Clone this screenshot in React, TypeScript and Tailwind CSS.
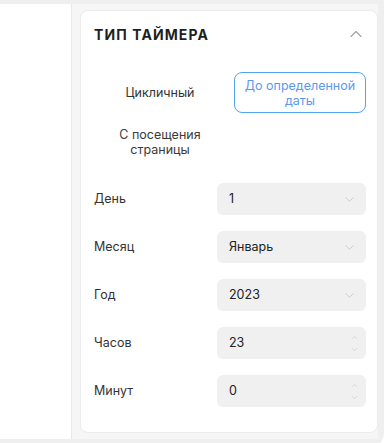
import { ChevronUp, ChevronDown } from "lucide-react";

const selects = [
    { label: "День", value: "1" },
    { label: "Месяц", value: "Январь" },
    { label: "Год", value: "2023" },
];

const numbers = [
    { label: "Часов", value: "23" },
    { label: "Минут", value: "0" },
];

function SelectBox({ value }: { value: string }) {
    return (
        <div className="flex h-8 items-center justify-between rounded-md bg-[#f0f0f0] pl-3 pr-[9px] text-[12.5px] text-[#222]">
            <span>{value}</span>
            <ChevronDown size={15} strokeWidth={1.2} className="text-[#c2c2c2]" />
        </div>
    );
}

function NumberBox({ value }: { value: string }) {
    return (
        <div className="flex h-8 items-center justify-between rounded-md bg-[#f0f0f0] pl-3 pr-[7px] text-[12.5px] text-[#222]">
            <span>{value}</span>
            <div className="flex flex-col items-center gap-[3px] text-[#c2c2c2]">
                <ChevronUp size={9} strokeWidth={1.4} />
                <ChevronDown size={9} strokeWidth={1.4} />
            </div>
        </div>
    );
}

export default function App() {
    return (
        <div
            className="h-[443px] w-[386px] overflow-hidden bg-white"
            style={{ fontFamily: "Inter, 'Noto Sans', sans-serif" }}
        >
            <div className="-mt-[10px] flex h-[457px] w-[384px] rounded-r-[14px] border-t-[14px] border-b-[8px] border-r-[6px] border-[#efefef] bg-white">
                {/* Left blank column */}
                <div className="w-[72px] shrink-0 border-r border-[#e8e8e8] bg-white" />

                {/* Settings panel */}
                <div className="flex-1 bg-[#f6f6f6] pl-2 pt-[6px] pb-[6px]">
                    <div className="h-full rounded-lg border border-[#ececec] bg-white pl-[13px] pr-[11px]">
                        {/* Header */}
                        <div className="flex h-[46px] items-center justify-between">
                            <h3 className="text-[14px] font-bold tracking-[1.1px] text-[#1f1f1f]">ТИП ТАЙМЕРА</h3>
                            <ChevronUp size={20} strokeWidth={1.3} className="text-[#a0a0a0]" />
                        </div>

                        {/* Timer type */}
                        <div className="mt-[15px] grid grid-cols-2 gap-x-2 gap-y-2">
                            <button className="flex h-[41px] items-center justify-center rounded-lg text-[12.5px] leading-[15px] text-[#333]">
                                Цикличный
                            </button>
                            <button className="flex h-[41px] flex-col items-center justify-center whitespace-nowrap rounded-lg border border-[#4fa3ef] text-[12.5px] leading-[15px] text-[#5b97f0]">
                                <span>До определенной</span>
                                <span>даты</span>
                            </button>
                            <button className="flex h-[41px] flex-col items-center justify-center whitespace-nowrap rounded-lg text-[12.5px] leading-[15px] text-[#3a3a3a]">
                                <span>С посещения</span>
                                <span>страницы</span>
                            </button>
                        </div>

                        {/* Date fields */}
                        <div className="mt-[21px] flex flex-col gap-4">
                            {selects.map((s) => (
                                <div key={s.label} className="grid grid-cols-[1fr_149px] items-center">
                                    <span className="text-[12.5px] text-[#333]">{s.label}</span>
                                    <SelectBox value={s.value} />
                                </div>
                            ))}
                            {numbers.map((n) => (
                                <div key={n.label} className="grid grid-cols-[1fr_149px] items-center">
                                    <span className="text-[12.5px] text-[#333]">{n.label}</span>
                                    <NumberBox value={n.value} />
                                </div>
                            ))}
                        </div>
                    </div>
                </div>
            </div>
        </div>
    );
}
